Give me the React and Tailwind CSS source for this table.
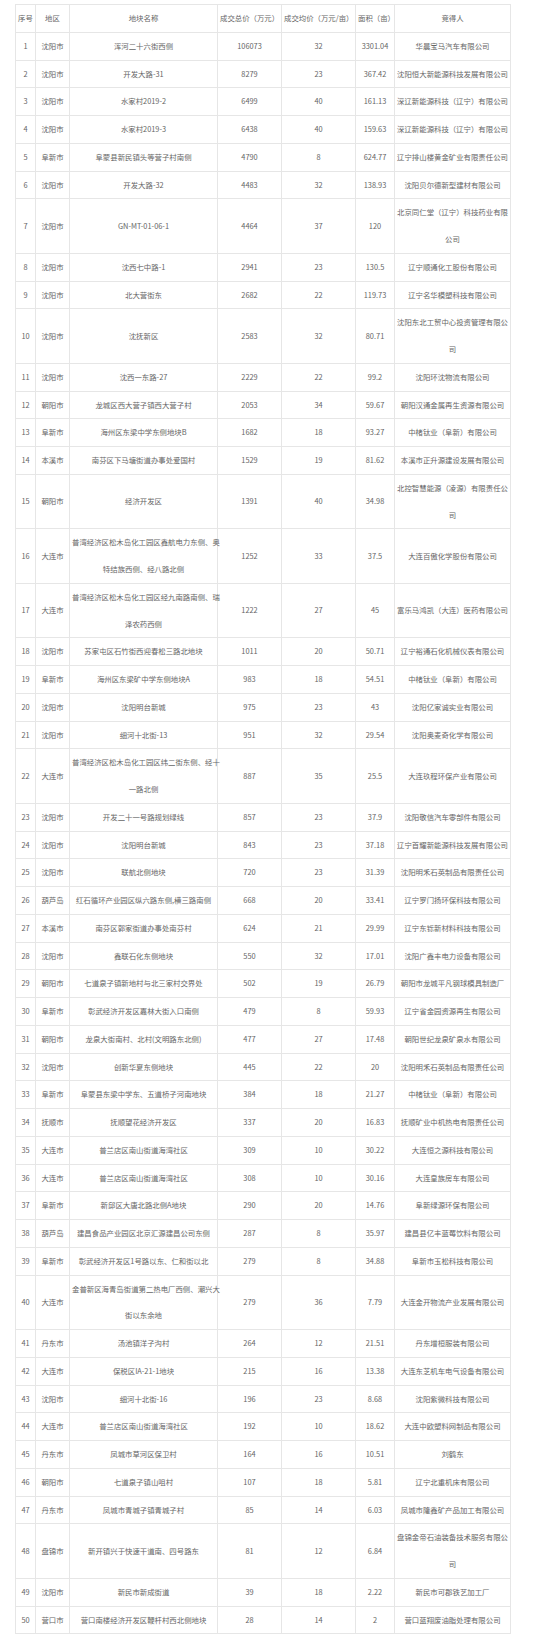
import React from 'react';

const headers = ['序号', '地区', '地块名称', '成交总价（万元）', '成交均价（万元/亩）', '面积（亩）', '竞得人'];

const colWidths = ['w-[20px]', 'w-[34px]', 'w-[148px]', 'w-[64px]', 'w-[74px]', 'w-[39px]', 'w-[116px]'];

// multi-line cells are written as arrays
const rows = [
    ['沈阳市', '浑河二十六街西侧', '106073', '32', '3301.04', '华晨宝马汽车有限公司'],
    ['沈阳市', '开发大路-31', '8279', '23', '367.42', '沈阳恒大新能源科技发展有限公司'],
    ['沈阳市', '水家村2019-2', '6499', '40', '161.13', '深辽新能源科技（辽宁）有限公司'],
    ['沈阳市', '水家村2019-3', '6438', '40', '159.63', '深辽新能源科技（辽宁）有限公司'],
    ['阜新市', '阜蒙县新民镇头等营子村南侧', '4790', '8', '624.77', '辽宁排山楼黄金矿业有限责任公司'],
    ['沈阳市', '开发大路-32', '4483', '32', '138.93', '沈阳贝尔德新型建材有限公司'],
    ['沈阳市', 'GN-MT-01-06-1', '4464', '37', '120', ['北京同仁堂（辽宁）科技药业有限', '公司']],
    ['沈阳市', '沈西七中路-1', '2941', '23', '130.5', '辽宁顺通化工股份有限公司'],
    ['沈阳市', '北大营街东', '2682', '22', '119.73', '辽宁名华模塑科技有限公司'],
    ['沈阳市', '沈抚新区', '2583', '32', '80.71', ['沈阳东北工贸中心投资管理有限公', '司']],
    ['沈阳市', '沈西一东路-27', '2229', '22', '99.2', '沈阳环沈物流有限公司'],
    ['朝阳市', '龙城区西大营子镇西大营子村', '2053', '34', '59.67', '朝阳汉通金属再生资源有限公司'],
    ['阜新市', '海州区东梁中学东侧地块B', '1682', '18', '93.27', '中楮钛业（阜新）有限公司'],
    ['本溪市', '南芬区下马塘街道办事处爱国村', '1529', '19', '81.62', '本溪市正升源建设发展有限公司'],
    ['朝阳市', '经济开发区', '1391', '40', '34.98', ['北控智慧能源（凌源）有限责任公', '司']],
    ['大连市', ['普湾经济区松木岛化工园区鑫航电力东侧、奥', '特结族西侧、经八路北侧'], '1252', '33', '37.5', '大连百傲化学股份有限公司'],
    ['大连市', ['普湾经济区松木岛化工园区经九南路南侧、瑞', '泽农药西侧'], '1222', '27', '45', '富乐马鸿凯（大连）医药有限公司'],
    ['沈阳市', '苏家屯区石竹街西迎春松三路北地块', '1011', '20', '50.71', '辽宁裕通石化机械仪表有限公司'],
    ['阜新市', '海州区东梁矿中学东侧地块A', '983', '18', '54.51', '中楮钛业（阜新）有限公司'],
    ['沈阳市', '沈阳明台新城', '975', '23', '43', '沈阳亿家诚实业有限公司'],
    ['沈阳市', '细河十北街-13', '951', '32', '29.54', '沈阳奥麦奇化学有限公司'],
    ['大连市', ['普湾经济区松木岛化工园区纬二街东侧、经十', '一路北侧'], '887', '35', '25.5', '大连玖程环保产业有限公司'],
    ['沈阳市', '开发二十一号路规划绿线', '857', '23', '37.9', '沈阳敬信汽车零部件有限公司'],
    ['沈阳市', '沈阳明台新城', '843', '23', '37.18', '辽宁首耀新能源科技发展有限公司'],
    ['沈阳市', '联航北侧地块', '720', '23', '31.39', '沈阳明禾石英制品有限责任公司'],
    ['葫芦岛', '红石循环产业园区纵六路东侧,横三路南侧', '668', '20', '33.41', '辽宁罗门扬环保科技有限公司'],
    ['本溪市', '南芬区郭家街道办事处南芬村', '624', '21', '29.99', '辽宁东铄新材料科技有限公司'],
    ['沈阳市', '鑫联石化东侧地块', '550', '32', '17.01', '沈阳广鑫丰电力设备有限公司'],
    ['朝阳市', '七道泉子镇新地村与北三家村交界处', '502', '19', '26.79', '朝阳市龙城平凡钢球模具制造厂'],
    ['阜新市', '彰武经济开发区嘉林大街入口南侧', '479', '8', '59.93', '辽宁省金园资源再生有限公司'],
    ['朝阳市', '龙泉大街南村、北村(文明路东北侧)', '477', '27', '17.48', '朝阳世纪龙泉矿泉水有限公司'],
    ['沈阳市', '创新华夏东侧地块', '445', '22', '20', '沈阳明禾石英制品有限责任公司'],
    ['阜新市', '阜蒙县东梁中学东、五道桥子河南地块', '384', '18', '21.27', '中楮钛业（阜新）有限公司'],
    ['抚顺市', '抚顺望花经济开发区', '337', '20', '16.83', '抚顺矿业中机热电有限责任公司'],
    ['大连市', '普兰店区南山街道海湾社区', '309', '10', '30.22', '大连恒之源科技有限公司'],
    ['大连市', '普兰店区南山街道海湾社区', '308', '10', '30.16', '大连皇族房车有限公司'],
    ['阜新市', '新邱区大唐北路北侧A地块', '290', '20', '14.76', '阜新绿源环保有限公司'],
    ['葫芦岛', '建昌食品产业园区北京汇源建昌公司东侧', '287', '8', '35.97', '建昌县亿丰蓝莓饮料有限公司'],
    ['阜新市', '彰武经济开发区1号路以东、仁和街以北', '279', '8', '34.88', '阜新市玉松科技有限公司'],
    ['大连市', ['金普新区海青岛街道第二热电厂西侧、潮兴大', '街以东余地'], '279', '36', '7.79', '大连金开物流产业发展有限公司'],
    ['丹东市', '汤池镇洋子沟村', '264', '12', '21.51', '丹东增桓服装有限公司'],
    ['大连市', '保税区IA-21-1地块', '215', '16', '13.38', '大连东芝机车电气设备有限公司'],
    ['沈阳市', '细河十北街-16', '196', '23', '8.68', '沈阳紫微科技有限公司'],
    ['大连市', '普兰店区南山街道海湾社区', '192', '10', '18.62', '大连中欧塑料网制品有限公司'],
    ['丹东市', '凤城市草河区保卫村', '164', '16', '10.51', '刘鹤东'],
    ['朝阳市', '七道泉子镇山咀村', '107', '18', '5.81', '辽宁北重机床有限公司'],
    ['丹东市', '凤城市青城子镇青城子村', '85', '14', '6.03', '凤城市隆鑫矿产品加工有限公司'],
    ['盘锦市', '新开镇兴于快速干道南、四号路东', '81', '12', '6.84', ['盘锦金帝石油装备技术服务有限公', '司']],
    ['沈阳市', '新民市新成街道', '39', '18', '2.22', '新民市可郡铁艺加工厂'],
    ['营口市', '营口南楼经济开发区鞭杆村西北侧地块', '28', '14', '2', '营口蓝翔废油脂处理有限公司'],
];

const cellClass = 'border border-[#e6e6e6] px-[2px] py-0 text-center align-middle leading-[26.75px] whitespace-nowrap overflow-visible font-normal';

const Cell = ({ value }) => {
    if (Array.isArray(value)) {
        return (
            <td className={cellClass}>
                {value.map((line, i) => (
                    <div key={i}>{line}</div>
                ))}
            </td>
        );
    }
    return <td className={cellClass}>{value}</td>;
};

const App = () => {
    return (
        <div className="min-h-screen bg-white pl-[15px] pt-[4px] font-['Noto_Sans_CJK_SC',sans-serif] text-[7.4px] text-[#666666]">
            <table className="table-fixed border-collapse w-[495px]">
                <colgroup>
                    {colWidths.map((w, i) => (
                        <col key={i} className={w} />
                    ))}
                </colgroup>
                <thead>
                    <tr>
                        {headers.map((h, i) => (
                            <th key={i} className={cellClass}>{h}</th>
                        ))}
                    </tr>
                </thead>
                <tbody>
                    {rows.map((row, index) => (
                        <tr key={index}>
                            <td className={cellClass}>{index + 1}</td>
                            {row.map((value, i) => (
                                <Cell key={i} value={value} />
                            ))}
                        </tr>
                    ))}
                </tbody>
            </table>
        </div>
    );
};

export default App;
